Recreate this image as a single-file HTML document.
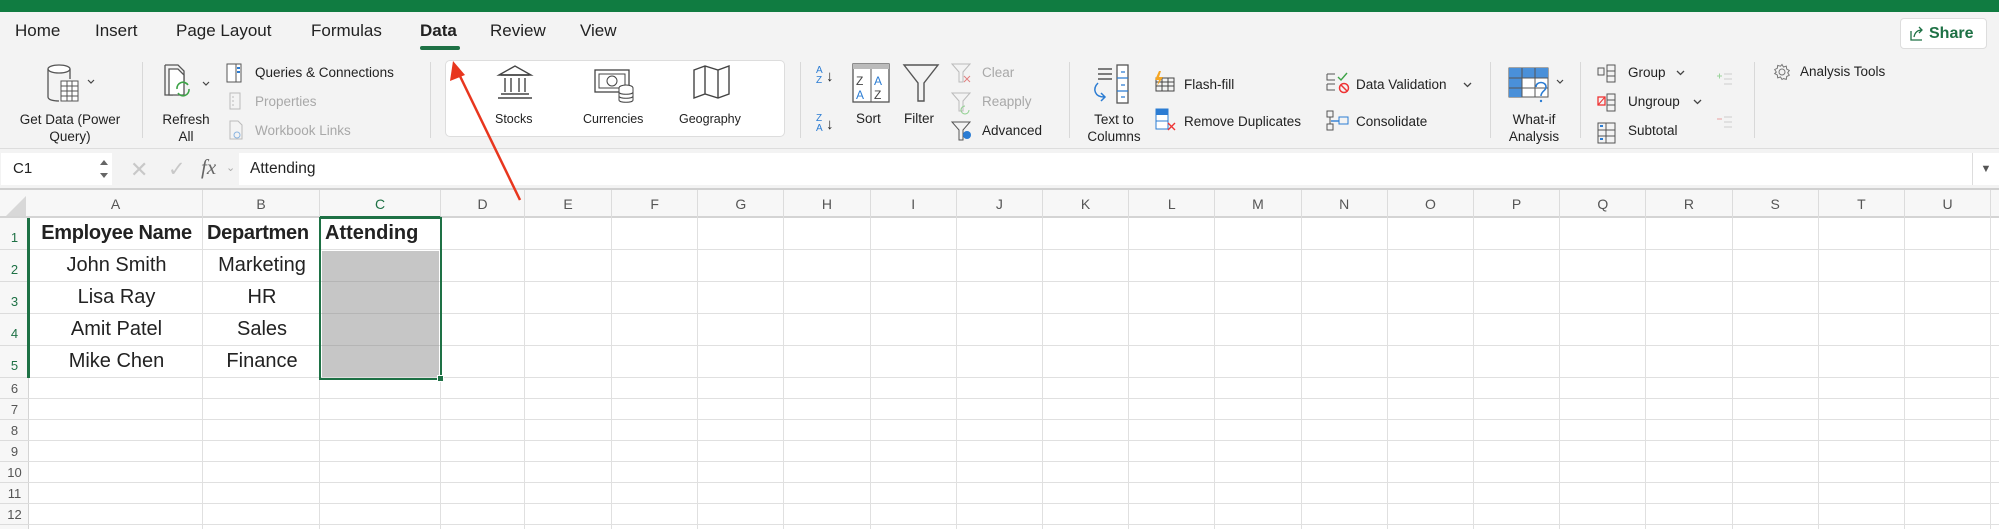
<!DOCTYPE html>
<html><head><meta charset="utf-8"><style>
*{margin:0;padding:0;box-sizing:border-box}
body{width:1999px;height:529px;overflow:hidden;background:#fff;font-family:"Liberation Sans",Arial,sans-serif;color:#222;position:relative}
.a{position:absolute;white-space:nowrap}
.t{font-size:17px;top:21px}
.r{font-size:13.5px}
.g{color:#a8a8a8}
.sep{position:absolute;width:1px;background:#d8d8d8;top:62px;height:76px}
.ch{position:absolute;top:190px;height:28px;font-size:14px;color:#555;text-align:center;line-height:28px;border-right:1px solid #dcdcdc}
.rh{position:absolute;left:0;width:29px;font-size:13px;color:#555;text-align:center;border-bottom:1px solid #dcdcdc}
.cell{position:absolute;font-family:"Liberation Sans",sans-serif;font-size:20px;text-align:center}
</style></head><body>
<div class="a" style="left:0;top:0;width:1999px;height:12px;background:#107c41"></div>
<div class="a" style="left:0;top:12px;width:1999px;height:140px;background:#f3f3f3"></div>
<div class="a t" style="left:15px">Home</div>
<div class="a t" style="left:95px">Insert</div>
<div class="a t" style="left:176px">Page Layout</div>
<div class="a t" style="left:311px">Formulas</div>
<div class="a t" style="left:420px;font-weight:bold">Data</div>
<div class="a" style="left:420px;top:46px;width:40px;height:4px;border-radius:2px;background:#1e7145"></div>
<div class="a t" style="left:490px">Review</div>
<div class="a t" style="left:580px">View</div>
<div class="a" style="left:1900px;top:18px;width:87px;height:31px;background:#fff;border:1px solid #ddd;border-radius:4px;color:#1e7145;font-weight:bold;font-size:16px;line-height:29px;padding-left:28px">Share
<svg style="position:absolute;left:9px;top:7px" width="14" height="15" viewBox="0 0 14 15"><path d="M1 5v9h11M4 11c1-5 4-7 8-7M9 1l3 3-3 3" fill="none" stroke="#1e7145" stroke-width="1.3"/></svg></div>

<svg class="a" style="left:45px;top:63px" width="58" height="42" viewBox="0 0 58 42"><ellipse cx="14" cy="6" rx="11" ry="4" fill="#fff" stroke="#555" stroke-width="1.3"/><path d="M3 6v28c0 3 6 4 11 4M25 6v10" fill="none" stroke="#555" stroke-width="1.3"/><rect x="16" y="18" width="17" height="20" fill="#fff" stroke="#555"/><path d="M16 23h17M16 28h17M16 33h17M22 18v20M27 18v20" stroke="#555"/><path d="M43 17l3 3 3-3" fill="none" stroke="#444" stroke-width="1.2"/></svg>
<div class="a r" style="left:15px;top:111px;text-align:center;width:110px;line-height:17px;white-space:normal">Get Data (Power Query)</div>
<div class="sep" style="left:142px"></div>
<svg class="a" style="left:163px;top:63px" width="52" height="40" viewBox="0 0 52 40"><path d="M2 2h13l6 6v10M2 2v30h8" fill="none" stroke="#555" stroke-width="1.3"/><path d="M6 6h9l6 6v20H6z" fill="#fff" stroke="#555" stroke-width="1.3"/><path d="M14 26a6 6 0 0 1 11-4M26 26a6 6 0 0 1-11 4" fill="none" stroke="#3ca246" stroke-width="1.6"/><path d="M40 19l3 3 3-3" fill="none" stroke="#444" stroke-width="1.2"/></svg>
<div class="a r" style="left:160px;top:111px;width:52px;text-align:center;line-height:17px;white-space:normal">Refresh All</div>
<svg class="a" style="left:226px;top:63px" width="16" height="20"><rect x="1" y="1" width="14" height="18" fill="#fff" stroke="#555"/><path d="M10 1v18" stroke="#555"/><path d="M11 5h3M11 9h3" stroke="#2b7cd3" stroke-width="2"/></svg>
<div class="a r" style="left:255px;top:65px">Queries &amp; Connections</div>
<svg class="a" style="left:229px;top:92px" width="12" height="18"><rect x="1" y="1" width="10" height="16" fill="none" stroke="#bbb"/><path d="M3 5h2M3 9h2M3 13h2" stroke="#bbb"/></svg>
<div class="a r g" style="left:255px;top:94px">Properties</div>
<svg class="a" style="left:229px;top:120px" width="14" height="20"><path d="M1 1h8l4 4v14H1z" fill="none" stroke="#bbb"/><circle cx="8" cy="15" r="3" fill="none" stroke="#8ab4e0"/></svg>
<div class="a r g" style="left:255px;top:123px">Workbook Links</div>
<div class="sep" style="left:430px"></div>
<div class="a" style="left:445px;top:60px;width:340px;height:77px;background:#fff;border:1px solid #ddd;border-radius:5px"></div>
<svg class="a" style="left:496px;top:64px" width="38" height="36" viewBox="0 0 38 36"><path d="M3 11L19 2l16 9z" fill="none" stroke="#444" stroke-width="1.4"/><path d="M5 11h28M5 30h28M2 34h34M9 14v14M15 14v14M23 14v14M29 14v14" stroke="#444" stroke-width="1.4"/></svg>
<div class="a r" style="left:495px;top:112px;font-size:12.5px">Stocks</div>
<svg class="a" style="left:594px;top:68px" width="42" height="36" viewBox="0 0 42 36"><rect x="1" y="2" width="34" height="22" fill="none" stroke="#444" stroke-width="1.3"/><rect x="5" y="6" width="26" height="14" fill="none" stroke="#444"/><circle cx="18" cy="13" r="5" fill="none" stroke="#444"/><ellipse cx="32" cy="20" rx="7" ry="3" fill="#fff" stroke="#444"/><path d="M25 20v12c0 3 14 3 14 0V20M25 24c0 3 14 3 14 0M25 28c0 3 14 3 14 0" fill="#fff" stroke="#444"/></svg>
<div class="a r" style="left:583px;top:112px;font-size:12.5px">Currencies</div>
<svg class="a" style="left:692px;top:64px" width="40" height="36" viewBox="0 0 40 36"><path d="M2 6l11-4 13 4 11-4v28l-11 4-13-4-11 4zM13 2v28M26 6v28" fill="none" stroke="#444" stroke-width="1.4"/></svg>
<div class="a r" style="left:679px;top:112px;font-size:12.5px">Geography</div>
<div class="sep" style="left:800px"></div>
<div class="a" style="left:816px;top:66px;font-size:10px;line-height:10px;color:#2b7cd3">A<br>Z</div><div class="a" style="left:826px;top:68px;font-size:15px">↓</div>
<div class="a" style="left:816px;top:114px;font-size:10px;line-height:10px;color:#2b7cd3">Z<br>A</div><div class="a" style="left:826px;top:116px;font-size:15px">↓</div>
<svg class="a" style="left:852px;top:63px" width="38" height="40" viewBox="0 0 38 40"><rect x="1" y="1" width="36" height="38" fill="#fff" stroke="#555" stroke-width="1.3"/><rect x="1" y="1" width="36" height="5" fill="#bbb"/><path d="M19 6v33" stroke="#555"/><text x="4" y="22" font-size="12" fill="#444" font-family="Liberation Sans">Z</text><text x="22" y="22" font-size="12" fill="#2b7cd3" font-family="Liberation Sans">A</text><text x="4" y="36" font-size="12" fill="#2b7cd3" font-family="Liberation Sans">A</text><text x="22" y="36" font-size="12" fill="#444" font-family="Liberation Sans">Z</text></svg>
<div class="a r" style="left:856px;top:111px">Sort</div>
<svg class="a" style="left:902px;top:63px" width="38" height="40" viewBox="0 0 38 40"><path d="M2 2h34L22 20v18h-6V20z" fill="none" stroke="#555" stroke-width="1.4"/></svg>
<div class="a r" style="left:904px;top:111px">Filter</div>
<svg class="a" style="left:950px;top:62px" width="24" height="80" viewBox="0 0 24 80"><path d="M2 2h18l-7 8v10h-4V10z" fill="none" stroke="#bbb"/><path d="M14 14l6 6M20 14l-6 6" stroke="#e08080"/><path d="M2 31h18l-7 8v10h-4V39z" fill="none" stroke="#bbb"/><path d="M15 44a4 4 0 1 0 4 4" fill="none" stroke="#8ccf8c"/><path d="M2 60h18l-7 8v10h-4V68z" fill="none" stroke="#555"/><circle cx="17" cy="73" r="4" fill="#2b7cd3"/></svg>
<div class="a r g" style="left:982px;top:65px">Clear</div>
<div class="a r g" style="left:982px;top:94px">Reapply</div>
<div class="a r" style="left:982px;top:123px">Advanced</div>
<div class="sep" style="left:1069px"></div>
<svg class="a" style="left:1090px;top:63px" width="46" height="42" viewBox="0 0 46 42"><path d="M8 6h14M8 11h14M8 16h14" stroke="#555" stroke-width="1.4"/><rect x="27" y="2" width="11" height="38" fill="#fff" stroke="#555" stroke-width="1.3"/><path d="M27 15h11M27 28h11M31 9h4M31 22h4M31 34h4" stroke="#2b7cd3" stroke-width="1.3"/><path d="M8 20c-6 6-3 14 6 14M11 30l4 4-4 4" fill="none" stroke="#2b7cd3" stroke-width="1.5"/></svg>
<div class="a r" style="left:1085px;top:111px;width:58px;text-align:center;line-height:17px;white-space:normal">Text to Columns</div>
<svg class="a" style="left:1153px;top:70px" width="22" height="22" viewBox="0 0 22 22"><path d="M3 8h18v13H3zM3 12h18M3 16h18M9 8v13M15 8v13" fill="none" stroke="#444"/><path d="M6 1L2 10h4l-2 6 6-9H6l2-6z" fill="#f5a623"/></svg>
<div class="a r" style="left:1184px;top:77px">Flash-fill</div>
<svg class="a" style="left:1155px;top:108px" width="22" height="24" viewBox="0 0 22 24"><rect x="1" y="1" width="12" height="20" fill="#fff" stroke="#2b7cd3"/><rect x="1" y="1" width="12" height="6" fill="#2b7cd3"/><path d="M1 13h12" stroke="#2b7cd3"/><path d="M13 15l7 7M20 15l-7 7" stroke="#e33" stroke-width="1.4"/></svg>
<div class="a r" style="left:1184px;top:114px">Remove Duplicates</div>
<svg class="a" style="left:1326px;top:72px" width="24" height="22" viewBox="0 0 24 22"><path d="M1 2h8M1 2v6h8M1 12h8M1 12v6h8" fill="none" stroke="#555"/><path d="M12 5l3 3 6-7" fill="none" stroke="#3ca246" stroke-width="1.4"/><circle cx="18" cy="16" r="4.5" fill="none" stroke="#e33" stroke-width="1.5"/><path d="M15 13l6 6" stroke="#e33" stroke-width="1.5"/></svg>
<div class="a r" style="left:1356px;top:77px">Data Validation</div>
<svg class="a" style="left:1463px;top:82px" width="9" height="6"><path d="M1 1l3.5 3.5L8 1" fill="none" stroke="#444" stroke-width="1.3"/></svg>
<svg class="a" style="left:1326px;top:110px" width="24" height="22" viewBox="0 0 24 22"><path d="M1 1h6v6H1zM1 14h6v6H1zM4 7v7" fill="none" stroke="#555"/><path d="M5 11h8" stroke="#2b7cd3" stroke-width="1.4"/><rect x="13" y="7" width="9" height="7" fill="none" stroke="#2b7cd3"/></svg>
<div class="a r" style="left:1356px;top:114px">Consolidate</div>
<div class="sep" style="left:1490px"></div>
<svg class="a" style="left:1508px;top:67px" width="58" height="36" viewBox="0 0 58 36"><rect x="1" y="1" width="39" height="29" fill="#fff" stroke="#555"/><rect x="1" y="1" width="13" height="29" fill="#4a90d9"/><rect x="1" y="1" width="39" height="10" fill="#4a90d9"/><path d="M14 1v29M27 1v29M1 11h39M1 21h39" stroke="#555"/><path d="M28 20c0-6 10-6 10 0 0 4-5 4-5 9" fill="none" stroke="#2b7cd3" stroke-width="1.6"/><circle cx="33" cy="34" r="1.2" fill="#2b7cd3"/><path d="M49 13l3 3 3-3" fill="none" stroke="#444" stroke-width="1.2"/></svg>
<div class="a r" style="left:1505px;top:111px;width:58px;text-align:center;line-height:17px;white-space:normal">What-if Analysis</div>
<div class="sep" style="left:1580px"></div>
<svg class="a" style="left:1597px;top:63px" width="20" height="84" viewBox="0 0 20 84"><g fill="none" stroke="#555"><rect x="10" y="2" width="8" height="17"/><path d="M10 8h8M10 13h8"/><rect x="1" y="5" width="6" height="7"/><rect x="10" y="31" width="8" height="17"/><path d="M10 37h8M10 42h8"/><rect x="1" y="60" width="17" height="20"/><path d="M9 60v20M1 67h17M1 73h17"/></g><rect x="1" y="34" width="7" height="8" fill="none" stroke="#e33" stroke-width="1.3"/><path d="M1 42l7-8" stroke="#e33"/><path d="M3 63h3M3 76h3" stroke="#2b7cd3" stroke-width="2"/></svg>
<div class="a r" style="left:1628px;top:65px">Group</div>
<svg class="a" style="left:1676px;top:70px" width="9" height="6"><path d="M1 1l3.5 3.5L8 1" fill="none" stroke="#444" stroke-width="1.3"/></svg>
<div class="a r" style="left:1628px;top:94px">Ungroup</div>
<svg class="a" style="left:1693px;top:99px" width="9" height="6"><path d="M1 1l3.5 3.5L8 1" fill="none" stroke="#444" stroke-width="1.3"/></svg>
<div class="a r" style="left:1628px;top:123px">Subtotal</div>
<svg class="a" style="left:1716px;top:72px" width="18" height="60" viewBox="0 0 18 60"><path d="M8 2h8M8 7h8M8 12h8M8 45h8M8 50h8M8 55h8" stroke="#ccc"/><path d="M1 4h5M3.5 1.5v5" stroke="#9cd49c"/><path d="M1 47h5" stroke="#e8a0a0"/></svg>
<div class="sep" style="left:1754px"></div>
<svg class="a" style="left:1773px;top:63px" width="18" height="18" viewBox="0 0 18 18"><circle cx="9" cy="9" r="3" fill="none" stroke="#777"/><path d="M9 1.5l1.5 2.5 2.8-.8.4 2.9 2.6 1.3-1.6 2.4 1.6 2.4-2.6 1.3-.4 2.9-2.8-.8L9 16.5l-1.5-2.5-2.8.8-.4-2.9-2.6-1.3L3.3 9 1.7 6.6l2.6-1.3.4-2.9 2.8.8z" fill="none" stroke="#777"/></svg>
<div class="a r" style="left:1800px;top:64px">Analysis Tools</div>
<div class="a" style="left:0;top:148px;width:1999px;height:1px;background:#ddd"></div>

<div class="a" style="left:0;top:149px;width:1999px;height:41px;background:#f3f3f3"></div>
<div class="a" style="left:1px;top:153px;width:111px;height:32px;background:#fff;font-size:15px;line-height:32px;padding-left:12px">C1</div>
<svg class="a" style="left:99px;top:158px" width="10" height="22"><path d="M1 7l4-5 4 5zM1 15l4 5 4-5z" fill="#666"/></svg>
<div class="a" style="left:130px;top:157px;font-size:22px;color:#c8c8c8">✕</div>
<div class="a" style="left:168px;top:157px;font-size:21px;color:#c8c8c8">✓</div>
<div class="a" style="left:201px;top:155px;font-size:21px;font-style:italic;font-family:'Liberation Serif',serif;color:#666">fx</div>
<div class="a" style="left:226px;top:161px;font-size:11px;color:#aaa">⌄</div>
<div class="a" style="left:239px;top:153px;width:1760px;height:32px;background:#fff;font-size:15.5px;line-height:32px;padding-left:11px">Attending</div>
<div class="a" style="left:1972px;top:153px;width:27px;height:32px;border-left:1px solid #ddd;background:#fff;font-size:11px;line-height:32px;text-align:center;color:#555">▼</div>
<div class="a" style="left:0;top:188px;width:1999px;height:2px;background:#d0d0d0"></div>

<div class="a" style="left:0;top:190px;width:1999px;height:28px;background:#f7f7f7;border-bottom:2px solid #d4d4d4"></div>
<svg class="a" style="left:6px;top:196px" width="20" height="20"><path d="M20 0v20H0z" fill="#d8d8d8"/></svg>
<div class="a" style="left:0;top:218px;width:29px;height:311px;background:#f7f7f7;border-right:1px solid #d4d4d4"></div>
<div id="g"></div>
<script>
var cols=["A","B","C","D","E","F","G","H","I","J","K","L","M","N","O","P","Q","R","S","T","U"];
var xs=[29,203,320,441,525,612];for(var i=6;i<=21;i++)xs.push(612+(i-5)*86.2);
var rows=[218,250,282,314,346,378,399,420,441,462,483,504,525];
var h="";
for(var i=0;i<21;i++){h+='<div class="ch" style="left:'+xs[i]+'px;width:'+(xs[i+1]-xs[i])+'px;'+(i==2?'color:#1e7145;border-bottom:2px solid #1e7145;':'')+'">'+cols[i]+'</div>';
h+='<div class="a" style="left:'+(xs[i+1]-1)+'px;top:218px;width:1px;height:311px;background:#e0e0e0"></div>';}
for(var r=0;r<12;r++){var y=rows[r],hh=rows[r+1]-y;
h+='<div class="rh" style="top:'+y+'px;height:'+hh+'px;line-height:'+(hh+(r<5?8:0))+'px;'+(r<5?'color:#1e7145;':'')+'">'+(r+1)+'</div>';
h+='<div class="a" style="left:29px;top:'+(y+hh-1)+'px;width:1970px;height:1px;background:#e0e0e0"></div>';}
document.getElementById("g").innerHTML=h;
</script>
<div class="a" style="left:27px;top:218px;width:3px;height:160px;background:#1e7145"></div>
<div class="a" style="left:322px;top:251px;width:117px;height:126px;background:#c6c6c6"></div>
<div class="a" style="left:322px;top:281px;width:117px;height:1px;background:#b5b5b5"></div>
<div class="a" style="left:322px;top:313px;width:117px;height:1px;background:#b5b5b5"></div>
<div class="a" style="left:322px;top:345px;width:117px;height:1px;background:#b5b5b5"></div>
<div class="a" style="left:319px;top:217px;width:123px;height:163px;border:2px solid #1e7145"></div>
<div class="a" style="left:437px;top:375px;width:7px;height:7px;background:#1e7145;border:1px solid #fff"></div>
<div class="cell" style="left:30px;top:222px;width:173px;font-weight:bold;letter-spacing:-0.3px">Employee Name</div>
<div class="cell" style="left:204px;top:222px;width:116px;font-weight:bold;overflow:hidden;text-align:left;padding-left:3px;letter-spacing:-0.3px">Departmen</div>
<div class="cell" style="left:325px;top:222px;text-align:left;font-weight:bold">Attending</div>
<div class="cell" style="left:30px;top:254px;width:173px">John Smith</div>
<div class="cell" style="left:204px;top:254px;width:116px">Marketing</div>
<div class="cell" style="left:30px;top:286px;width:173px">Lisa Ray</div>
<div class="cell" style="left:204px;top:286px;width:116px">HR</div>
<div class="cell" style="left:30px;top:318px;width:173px">Amit Patel</div>
<div class="cell" style="left:204px;top:318px;width:116px">Sales</div>
<div class="cell" style="left:30px;top:350px;width:173px">Mike Chen</div>
<div class="cell" style="left:204px;top:350px;width:116px">Finance</div>

<svg class="a" style="left:0;top:0" width="1999" height="529"><path d="M520 200L458 72" stroke="#e8361e" stroke-width="2.5"/><path d="M453 61l-3 20 15-6z" fill="#e8361e"/></svg>
</body></html>
